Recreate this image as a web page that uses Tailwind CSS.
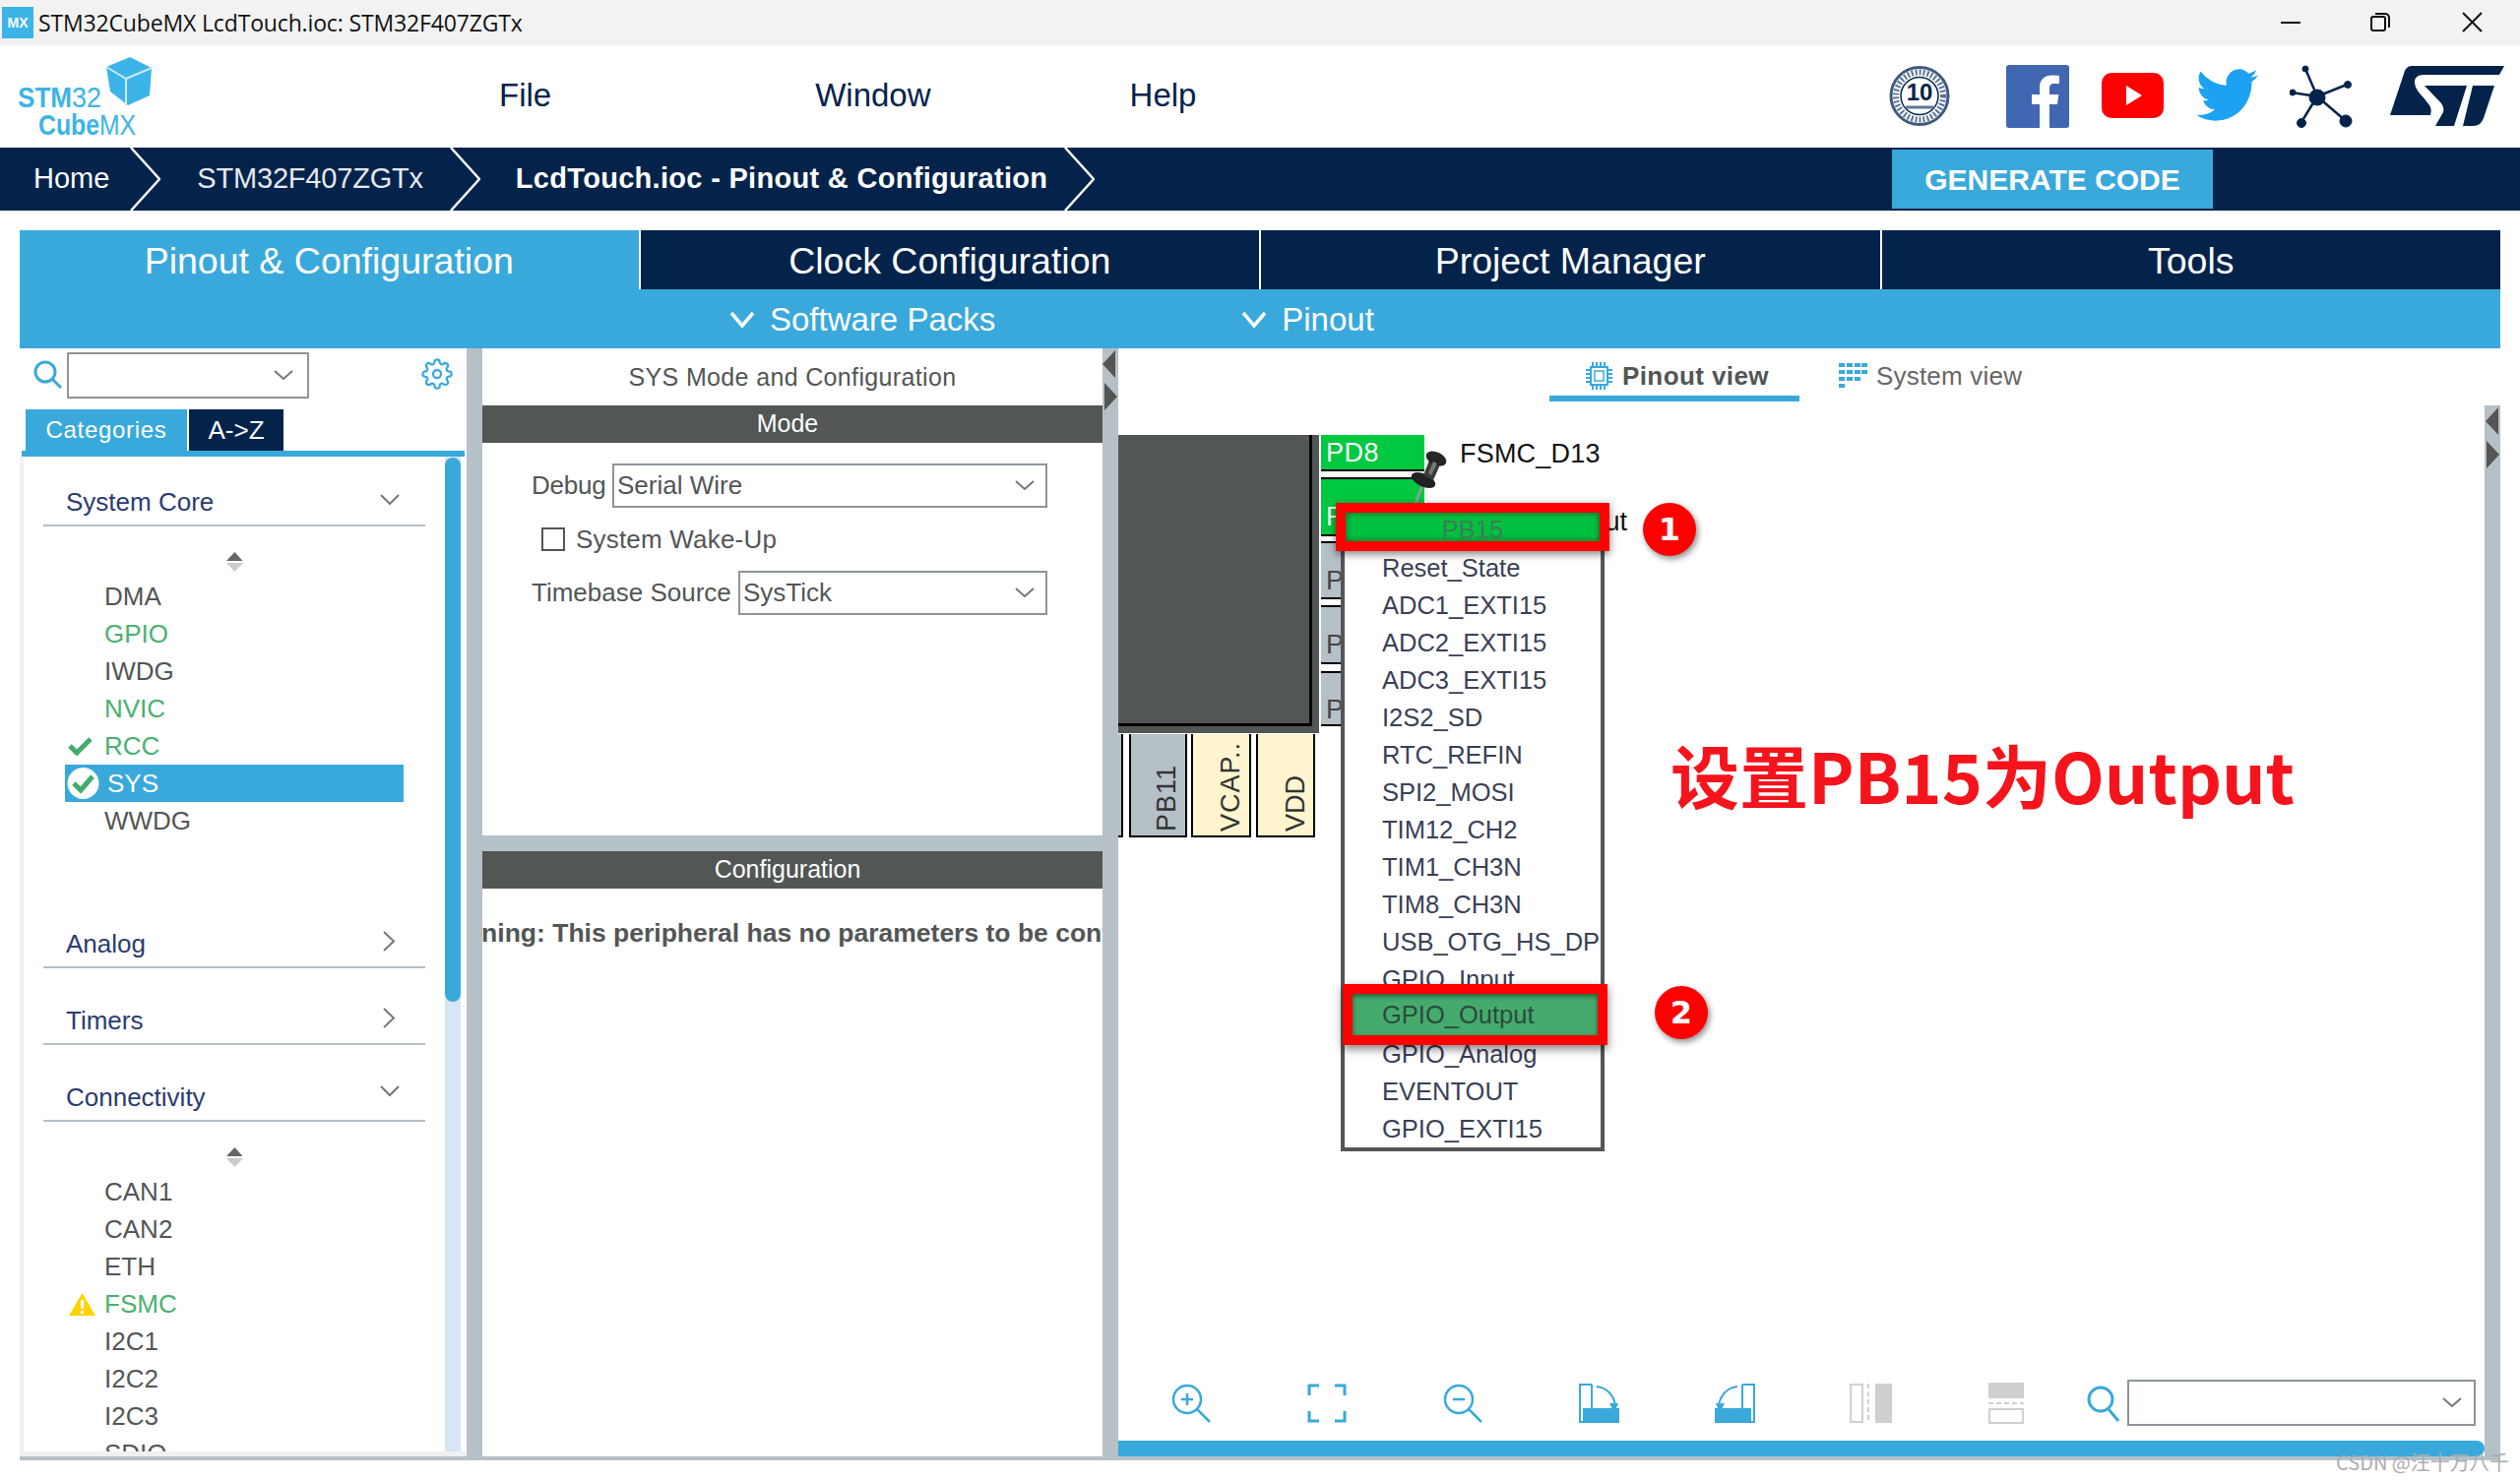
<!DOCTYPE html>
<html lang="en">
<head>
<meta charset="UTF-8">
<title>STM32CubeMX LcdTouch.ioc: STM32F407ZGTx</title>
<script src="https://cdn.jsdelivr.net/npm/@tailwindcss/browser@4"></script>
</head>
<body class="w-[2560px] h-[1504px] overflow-hidden bg-white relative font-['Liberation_Sans','Noto_Sans_CJK_SC',sans-serif] text-[26px] text-[#525655]">

<!-- Title bar -->
<div class="h-[46px] bg-[#f2f2f2] flex items-center relative">
  <div class="ml-[2px] w-[32px] h-[32px] bg-[#3cb4e7] text-white text-[14px] font-bold flex items-center justify-center">MX</div>
  <span class="ml-[5px] text-[23px] text-[#111] font-['Open_Sans',sans-serif] tracking-[-0.15px]">STM32CubeMX LcdTouch.ioc: STM32F407ZGTx</span>
  <svg class="ml-auto mr-[223px] w-[20px] h-[20px]" viewBox="0 0 20 20"><path d="M0 10h20" stroke="#111" stroke-width="2"/></svg>
  <svg class="absolute left-[2408px] top-[12px] w-[20px] h-[20px]" viewBox="0 0 20 20" fill="none" stroke="#111" stroke-width="2"><rect x="1" y="5" width="14" height="14" rx="2"/><path d="M5 2h10a4 4 0 0 1 4 4v10"/></svg>
  <svg class="absolute left-[2501px] top-[12px] w-[21px] h-[21px]" viewBox="0 0 21 21" stroke="#111" stroke-width="2"><path d="M1 1l19 19M20 1L1 20"/></svg>
</div>

<!-- Menu bar -->
<div class="h-[104px] relative flex items-center text-[33px] text-[#03234b] pb-[2px]">
  <svg class="absolute left-[14px] top-[8px] w-[145px] h-[88px]" viewBox="0 0 145 88">
    <path d="M118 4l22 11-2 28-22 10-18-14-4-25z" fill="#3cb4e7"/>
    <path d="M114 26v27M114 26L94 14M114 26l26-11" stroke="#cfeaf8" stroke-width="2" fill="none"/>
    <text x="4" y="55" font-size="30" font-weight="700" fill="#3cb4e7" textLength="55" lengthAdjust="spacingAndGlyphs">STM</text>
    <text x="59" y="55" font-size="30" fill="#3cb4e7" textLength="30" lengthAdjust="spacingAndGlyphs">32</text>
    <text x="25" y="83" font-size="30" font-weight="700" fill="#3cb4e7" textLength="62" lengthAdjust="spacingAndGlyphs">Cube</text>
    <text x="87" y="83" font-size="30" fill="#3cb4e7" textLength="37" lengthAdjust="spacingAndGlyphs">MX</text>
  </svg>
  <span class="ml-[507px]">File</span>
  <span class="ml-[268px]">Window</span>
  <span class="ml-[202px]">Help</span>

  <svg class="absolute left-[1919px] top-[20px] w-[62px] h-[63px]" viewBox="0 0 62 63">
    <circle cx="31" cy="31.5" r="29" fill="#fff" stroke="#3f5a80" stroke-width="3"/>
    <circle cx="31" cy="31.5" r="24" fill="none" stroke="#5d7596" stroke-width="6" stroke-dasharray="2 2"/>
    <circle cx="31" cy="31.5" r="19" fill="#fff" stroke="#03234b" stroke-width="1.5"/>
    <text x="31" y="36" font-size="24" font-weight="700" fill="#03234b" text-anchor="middle">10</text>
    <path d="M17 43h28" stroke="#5d7596" stroke-width="3"/>
  </svg>
  <svg class="absolute left-[2038px] top-[20px] w-[64px] h-[64px]" viewBox="0 0 64 64">
    <rect width="64" height="64" rx="3" fill="#4267b2"/>
    <path d="M44 64V40h8l1.300-10H44v-6c0-3 1-5 5-5h5V11c-1 0-4-.4-7.500-.4C39 10.600 34 15 34 23v7h-8v10h8v24z" fill="#fff"/>
  </svg>
  <svg class="absolute left-[2135px] top-[28px] w-[63px] h-[46px]" viewBox="0 0 63 46">
    <rect width="63" height="46" rx="10" fill="#f00"/>
    <path d="M25 13l16 10-16 10z" fill="#fff"/>
  </svg>
  <svg class="absolute left-[2231px] top-[24px] w-[63px] h-[54px]" viewBox="0 0 24 20" preserveAspectRatio="none">
    <path d="M24 2.400a9.800 9.800 0 0 1-2.800.8A4.900 4.900 0 0 0 23.300.500a9.800 9.800 0 0 1-3.100 1.200A4.900 4.900 0 0 0 11.800 6.200 14 14 0 0 1 1.700.900a4.900 4.900 0 0 0 1.500 6.600A4.900 4.900 0 0 1 1 6.900v.1a4.900 4.900 0 0 0 3.900 4.800 4.900 4.900 0 0 1-2.200.1 4.900 4.900 0 0 0 4.600 3.400A9.900 9.900 0 0 1 0 17.300 13.900 13.900 0 0 0 7.500 19.500c9.100 0 14-7.500 14-14v-.6A10 10 0 0 0 24 2.400z" fill="#1da1f2"/>
  </svg>
  <svg class="absolute left-[2326px] top-[20px] w-[64px] h-[64px]" viewBox="0 0 64 64" fill="#03234b" stroke="#03234b">
    <path d="M28 32L16 4M28 32L58 20M28 32L2 28M28 32L12 58M28 32L56 56" stroke-width="2.500" fill="none"/>
    <circle cx="28" cy="33" r="8"/><circle cx="16" cy="4" r="3"/><circle cx="59" cy="20" r="3.500"/><circle cx="3" cy="28" r="3"/><circle cx="12" cy="59" r="4.500"/><circle cx="57" cy="57" r="6"/>
  </svg>
  <svg class="absolute left-[2428px] top-[20px] w-[116px] h-[64px]" viewBox="0 0 116 64" fill="#03234b">
    <path d="M22 1H116L111 10H34c-6 0-9 3-9 7 0 5 3 10 8 15l7 9c2 3 2 6 1 10H0L14 9c1-5 4-8 8-8z"/>
    <path d="M35 21H78L65 62H46l8-14c1-3 0-6-2-9z"/>
    <path d="M84 21h22L95 54c-2 5-5 8-11 8H74z"/>
  </svg>
</div>

<!-- Breadcrumb -->
<div class="h-[64px] bg-[#03234b] flex items-center text-white text-[29px]">
  <span class="ml-[34px]">Home</span>
  <svg class="ml-[21px] w-[31px] h-[64px]" viewBox="0 0 31 64" fill="none" stroke="#fff" stroke-width="2.500"><path d="M1 0l29 32L1 64"/></svg>
  <span class="ml-[37px] text-[#e6e9ee] tracking-[-0.2px]">STM32F407ZGTx</span>
  <svg class="ml-[27px] w-[31px] h-[64px]" viewBox="0 0 31 64" fill="none" stroke="#fff" stroke-width="2.500"><path d="M1 0l29 32L1 64"/></svg>
  <span class="ml-[36px] font-bold tracking-[0.3px]">LcdTouch.ioc - Pinout &amp; Configuration</span>
  <svg class="ml-[17px] w-[31px] h-[64px]" viewBox="0 0 31 64" fill="none" stroke="#fff" stroke-width="2.500"><path d="M1 0l29 32L1 64"/></svg>
  <div class="ml-auto mr-[312px] w-[326px] h-[60px] bg-[#39a9dc] flex items-center justify-center font-bold text-[30px]">GENERATE CODE</div>
</div>

<!-- Perspective tabs -->
<div class="mt-[20px] mx-[20px] h-[60px] grid grid-cols-4 gap-[2px] text-white text-[37.500px] bg-white">
  <div class="bg-[#39a9dc] flex items-center justify-center pt-[2px]">Pinout &amp; Configuration</div>
  <div class="bg-[#03234b] flex items-center justify-center pt-[2px]">Clock Configuration</div>
  <div class="bg-[#03234b] flex items-center justify-center pt-[2px]">Project Manager</div>
  <div class="bg-[#03234b] flex items-center justify-center pt-[2px]">Tools</div>
</div>
<div class="mx-[20px] h-[60px] bg-[#39a9dc] flex items-center text-white text-[33px] pt-[2px]">
  <svg class="ml-[721px] w-[26px] h-[18px]" viewBox="0 0 26 18" fill="none" stroke="#fff" stroke-width="3.500"><path d="M2 2l11 13L24 2"/></svg>
  <span class="ml-[15px]">Software Packs</span>
  <svg class="ml-[250px] w-[26px] h-[18px]" viewBox="0 0 26 18" fill="none" stroke="#fff" stroke-width="3.500"><path d="M2 2l11 13L24 2"/></svg>
  <span class="ml-[15px]">Pinout</span>
</div>

<!-- Workspace -->
<div class="mx-[20px] h-[1130px] flex">

  <!-- Categories column -->
  <div class="w-[454px] h-full flex flex-col relative">
    <div class="h-[62px] flex items-start pt-[4px] relative">
      <svg class="ml-[14px] mt-[8px] w-[29px] h-[29px]" viewBox="0 0 29 29" fill="none" stroke="#39a9dc" stroke-width="3"><circle cx="12" cy="12" r="10"/><path d="M19 19l9 9"/></svg>
      <div class="ml-[5px] w-[246px] h-[47px] border-[2px] border-[#8e9499] flex items-center justify-end pr-[14px]">
        <svg class="w-[20px] h-[11px]" viewBox="0 0 20 11" fill="none" stroke="#777" stroke-width="2"><path d="M1 1l9 8 9-8"/></svg>
      </div>
      <svg class="ml-[114px] mt-[6px] w-[32px] h-[32px]" viewBox="0 0 24 24" fill="none" stroke="#39a9dc" stroke-width="1.700"><circle cx="12" cy="12" r="3"/><path d="M19.4 15a1.650 1.650 0 0 0 .33 1.820l.06.06a2 2 0 0 1 0 2.830 2 2 0 0 1-2.830 0l-.06-.06a1.650 1.650 0 0 0-1.820-.33 1.650 1.650 0 0 0-1 1.510V21a2 2 0 0 1-2 2 2 2 0 0 1-2-2v-.09A1.650 1.650 0 0 0 9 19.400a1.650 1.650 0 0 0-1.820.33l-.06.06a2 2 0 0 1-2.830 0 2 2 0 0 1 0-2.830l.06-.06a1.650 1.650 0 0 0 .33-1.820 1.650 1.650 0 0 0-1.510-1H3a2 2 0 0 1-2-2 2 2 0 0 1 2-2h.09A1.650 1.650 0 0 0 4.600 9a1.650 1.650 0 0 0-.33-1.820l-.06-.06a2 2 0 0 1 0-2.830 2 2 0 0 1 2.830 0l.06.06a1.650 1.650 0 0 0 1.820.33H9a1.650 1.650 0 0 0 1-1.510V3a2 2 0 0 1 2-2 2 2 0 0 1 2 2v.09a1.650 1.650 0 0 0 1 1.510 1.650 1.650 0 0 0 1.820-.33l.06-.06a2 2 0 0 1 2.830 0 2 2 0 0 1 0 2.830l-.06.06a1.650 1.650 0 0 0-.33 1.820V9a1.650 1.650 0 0 0 1.510 1H21a2 2 0 0 1 2 2 2 2 0 0 1-2 2h-.09a1.650 1.650 0 0 0-1.510 1z"/></svg>
    </div>
    <div class="h-[42px] flex text-white text-[24px] pl-[6px] gap-[2px]">
      <div class="w-[164px] bg-[#39a9dc] flex items-center justify-center tracking-[0.7px]">Categories</div>
      <div class="w-[96px] bg-[#03234b] flex items-center justify-center text-[26px]">A-&gt;Z</div>
    </div>
    <div class="ml-[2px] mr-[2px] h-[6px] bg-[#39a9dc] shrink-0"></div>

    <div class="flex-1 flex overflow-hidden border-l-[4px] border-[#f0f0f0] relative">
      <div class="flex-1 pl-[20px] pr-[20px] overflow-hidden">
        <!-- System Core -->
        <div class="w-[388px] h-[71px] border-b-[2px] border-[#b5c0c7] flex items-end justify-between pl-[23px] pb-[3px] text-[#2a3b70]">
          <span>System Core</span>
          <svg class="mr-[26px] mb-[16px] w-[20px] h-[12px]" viewBox="0 0 20 12" fill="none" stroke="#777" stroke-width="2"><path d="M1 1l9 9 9-9"/></svg>
        </div>
        <div class="w-[388px] h-[52px] flex items-center pl-[186px] pt-[20px]">
          <svg class="w-[17px] h-[20px]" viewBox="0 0 17 20"><path d="M8.500 0l8 9H0z" fill="#666"/><path d="M0 11h17l-8.500 9z" fill="#ccc"/></svg>
        </div>
        <div class="flex flex-col w-[388px] leading-[38px] pl-[62px]">
          <span class="h-[38px]">DMA</span>
          <span class="h-[38px] text-[#49b170]">GPIO</span>
          <span class="h-[38px]">IWDG</span>
          <span class="h-[38px] text-[#49b170]">NVIC</span>
          <span class="h-[38px] text-[#49b170] relative">RCC
            <svg class="absolute left-[-37px] top-[10px] w-[25px] h-[19px]" viewBox="0 0 25 19" fill="none" stroke="#45ab6c" stroke-width="5"><path d="M2 9l7 7L23 2"/></svg>
          </span>
          <span class="h-[38px] relative text-white z-0 pl-[3px]">
            <span class="absolute left-[-40px] w-[344px] top-0 h-[38px] bg-[#39a9dc] -z-10"></span>
            <svg class="absolute left-[-38px] top-[2px] w-[33px] h-[34px]" viewBox="0 0 33 34"><circle cx="16.500" cy="17" r="16" fill="#fff"/><path d="M7 17l7 7L26 10" fill="none" stroke="#45ab6c" stroke-width="5"/></svg>
            SYS</span>
          <span class="h-[38px]">WWDG</span>
        </div>
        <!-- Analog, Timers -->
        <div class="mt-[73px] w-[388px] h-[58px] border-b-[2px] border-[#b5c0c7] flex items-end justify-between pl-[23px] pb-[3px] text-[#2a3b70]">
          <span>Analog</span>
          <svg class="mr-[30px] mb-[12px] w-[13px] h-[21px]" viewBox="0 0 13 21" fill="none" stroke="#777" stroke-width="2"><path d="M1 1l10 9.500L1 20"/></svg>
        </div>
        <div class="mt-[20px] w-[388px] h-[58px] border-b-[2px] border-[#b5c0c7] flex items-end justify-between pl-[23px] pb-[3px] text-[#2a3b70]">
          <span>Timers</span>
          <svg class="mr-[30px] mb-[12px] w-[13px] h-[21px]" viewBox="0 0 13 21" fill="none" stroke="#777" stroke-width="2"><path d="M1 1l10 9.500L1 20"/></svg>
        </div>
        <div class="mt-[20px] w-[388px] h-[58px] border-b-[2px] border-[#b5c0c7] flex items-end justify-between pl-[23px] pb-[3px] text-[#2a3b70]">
          <span>Connectivity</span>
          <svg class="mr-[26px] mb-[20px] w-[20px] h-[12px]" viewBox="0 0 20 12" fill="none" stroke="#777" stroke-width="2"><path d="M1 1l9 9 9-9"/></svg>
        </div>
        <div class="w-[388px] h-[52px] flex items-center pl-[186px] pt-[20px]">
          <svg class="w-[17px] h-[20px]" viewBox="0 0 17 20"><path d="M8.500 0l8 9H0z" fill="#666"/><path d="M0 11h17l-8.500 9z" fill="#ccc"/></svg>
        </div>
        <div class="flex flex-col w-[388px] leading-[38px] pl-[62px]">
          <span class="h-[38px]">CAN1</span>
          <span class="h-[38px]">CAN2</span>
          <span class="h-[38px]">ETH</span>
          <span class="h-[38px] text-[#49b170] relative">FSMC
            <svg class="absolute left-[-36px] top-[8px] w-[27px] h-[23px]" viewBox="0 0 27 23"><path d="M13.500 0L27 23H0z" fill="#ffd200"/><path d="M13.500 7v9M13.500 18v3" stroke="#fff" stroke-width="3"/></svg>
          </span>
          <span class="h-[38px]">I2C1</span>
          <span class="h-[38px]">I2C2</span>
          <span class="h-[38px]">I2C3</span>
          <span class="h-[38px]">SDIO</span>
        </div>
      </div>
      <!-- scrollbar -->
      <div class="w-[16px] mr-[6px] bg-[#d6e6f4] shrink-0">
        <div class="h-[553px] mt-[1px] bg-[#39a9dc] rounded-full"></div>
      </div>
      <div class="absolute left-0 right-0 bottom-0 h-[5px] bg-[#f0f0f0]"></div>
    </div>
    <div class="h-[4px] bg-[#b5c0c7] shrink-0"></div>
  </div>

  <div class="w-[16px] h-full bg-[#b5c0c7] shrink-0"></div>

  <!-- Mode and configuration column -->
  <div class="w-[630px] h-full flex flex-col shrink-0">
    <div class="h-[58px] flex items-center justify-center tracking-[0.35px] text-[25px] pt-[1px]">SYS Mode and Configuration</div>
    <div class="h-[38px] bg-[#525655] text-white text-[25px] flex items-center justify-center pr-[10px]">Mode</div>
    <div class="flex-none h-[399px] relative pl-[50px]">
      <div class="flex items-center pt-[21px] h-[66px]">
        <span class="w-[82px] tracking-[-0.2px]">Debug</span>
        <div class="w-[442px] h-[45px] border-[2px] border-[#8e9499] flex items-center justify-between pl-[3px] pr-[11px]">
          <span>Serial Wire</span>
          <svg class="w-[20px] h-[11px]" viewBox="0 0 20 11" fill="none" stroke="#777" stroke-width="2"><path d="M1 1l9 8 9-8"/></svg>
        </div>
      </div>
      <div class="flex items-center h-[64px] pl-[10px]">
        <span class="w-[24px] h-[24px] border-[2px] border-[#555] mr-[11px]"></span>
        <span class="tracking-[0.2px]">System Wake-Up</span>
      </div>
      <div class="flex items-center h-[45px]">
        <span class="w-[210px]">Timebase Source</span>
        <div class="w-[314px] h-[45px] border-[2px] border-[#8e9499] flex items-center justify-between pl-[3px] pr-[11px]">
          <span>SysTick</span>
          <svg class="w-[20px] h-[11px]" viewBox="0 0 20 11" fill="none" stroke="#777" stroke-width="2"><path d="M1 1l9 8 9-8"/></svg>
        </div>
      </div>
    </div>
    <div class="h-[16px] bg-[#b5c0c7] shrink-0"></div>
    <div class="h-[38px] bg-[#525655] text-white text-[25px] flex items-center justify-center pr-[10px] shrink-0">Configuration</div>
    <div class="flex-1 overflow-hidden relative">
      <div class="pt-[26px] font-bold text-[26.500px] whitespace-nowrap ml-[-50px]">Warning: This peripheral has no parameters to be configured</div>
    </div>
    <div class="h-[4px] bg-[#b5c0c7] shrink-0"></div>
  </div>

  <div class="w-[16px] h-full bg-[#b5c0c7] shrink-0 flex flex-col items-center pt-[2px] gap-[5px]">
    <svg class="w-[16px] h-[28px]" viewBox="0 0 16 28"><path d="M13 0v28L0 14z" fill="#555"/></svg>
    <svg class="w-[16px] h-[28px]" viewBox="0 0 16 28"><path d="M2 0v28l13-14z" fill="#555"/></svg>
  </div>

  <!-- Pinout canvas -->
  <div class="w-[1388px] h-full flex flex-col shrink-0">
    <div class="h-[58px] shrink-0 flex items-start relative">
      <div class="ml-[438px] w-[254px] h-[54px] border-b-[6px] border-[#39a9dc] flex items-center pl-[37px] pt-[8px] font-bold text-[#525655] tracking-[0.4px]">
        <svg class="w-[27px] h-[28px] mr-[10px]" viewBox="0 0 27 28" fill="none" stroke="#39a9dc"><rect x="5" y="5" width="17" height="18" stroke-width="2"/><rect x="9" y="9" width="9" height="10" stroke-width="1.500"/><path d="M7 0v4M11 0v4M15 0v4M19 0v4M7 24v4M11 24v4M15 24v4M19 24v4M0 8h4M0 12h4M0 16h4M0 20h4M23 8h4M23 12h4M23 16h4M23 20h4" stroke-width="2"/></svg>
        Pinout view
      </div>
      <div class="ml-[40px] h-[54px] flex items-center pt-[2px] text-[#666] tracking-[0.2px]">
        <svg class="w-[29px] h-[26px] mr-[9px]" viewBox="0 0 29 26" fill="#39a9dc"><path d="M0 0h6v4H0zM8 0h6v4H8zM16 0h6v4h-6zM23 0h6v4h-6zM0 7h6v4H0zM8 7h6v4H8zM16 7h6v4h-6zM23 7h6v4h-6zM0 14h6v4H0zM8 14h6v4H8zM16 14h6v4h-6zM0 21h6v4H0z"/></svg>
        System view
      </div>
    </div>

    <div class="h-[990px] relative shrink-0 text-[27px]">
      <!-- chip body and pins -->
      <div class="absolute left-0 top-[30px] w-[204px] h-[303px] bg-[#525655]">
        <div class="w-[197px] h-[296px] border-r-[3px] border-b-[3px] border-black"></div>
      </div>
      <div class="absolute left-[206px] top-[30px] w-[105px] h-[37px] bg-[#00c840] border-b-[2px] border-black text-white pl-[5px] leading-[37px] tracking-[0.5px]">PD8</div>
      <div class="absolute left-[347px] top-[29px] text-[#111] tracking-[0.2px]">FSMC_D13</div>
      <div class="absolute left-[206px] top-[73px] w-[105px] h-[60px] bg-[#00c840] border-y-[2px] border-black text-white pl-[5px] leading-[76px]">P</div>
      <div class="absolute right-[871px] top-[98px] text-[#111]">GPIO_Output</div>
      <div class="absolute left-[206px] top-[138px] w-[105px] h-[59px] bg-[#b5c0c7] border-y-[2px] border-black pl-[5px] leading-[76px] text-[#444]">P</div>
      <div class="absolute left-[206px] top-[203px] w-[105px] h-[60px] bg-[#b5c0c7] border-y-[2px] border-black pl-[5px] leading-[76px] text-[#444]">P</div>
      <div class="absolute left-[206px] top-[270px] w-[105px] h-[56px] bg-[#b5c0c7] border-y-[2px] border-black pl-[5px] leading-[74px] text-[#444]">P</div>
      <div class="absolute left-0 top-[334px] w-[5px] h-[105px] bg-[#b5c0c7] border-r-[2px] border-b-[2px] border-black"></div>
      <div class="absolute left-[11px] top-[334px] w-[59px] h-[105px] bg-[#b5c0c7] border-x-[2px] border-b-[2px] border-black flex items-end justify-end pr-[5px] pb-[4px] leading-none text-[#333]"><span class="[writing-mode:vertical-rl] rotate-180 tracking-[1px]">PB11</span></div>
      <div class="absolute left-[74px] top-[334px] w-[61px] h-[105px] bg-[#fef5cf] border-x-[2px] border-b-[2px] border-black flex items-end justify-end pr-[5px] pb-[4px] leading-none text-[#333]"><span class="[writing-mode:vertical-rl] rotate-180 tracking-[1px]">VCAP..</span></div>
      <div class="absolute left-[140px] top-[334px] w-[60px] h-[105px] bg-[#fef5cf] border-x-[2px] border-b-[2px] border-black flex items-end justify-end pr-[4px] pb-[4px] leading-none text-[#333]"><span class="[writing-mode:vertical-rl] rotate-180">VDD</span></div>

      <!-- pushpin -->
      <svg class="absolute left-[294px] top-[43px] w-[46px] h-[60px]" viewBox="0 0 46 60">
        <path d="M15 38L8 56" stroke="#999" stroke-width="2.500"/>
        <ellipse cx="16" cy="33" rx="13" ry="6.500" transform="rotate(25 16 33)" fill="#222"/>
        <path d="M23 10l11 5-8 18-10-5z" fill="#3a3a3a"/>
        <ellipse cx="29" cy="11" rx="11" ry="6.500" transform="rotate(25 29 11)" fill="#262626"/>
        <path d="M26 14l4 2-6 12-3-2z" fill="#777"/>
      </svg>

      <!-- signal menu -->
      <div class="absolute left-[226px] top-[107px] w-[268px] bg-white border-x-[4px] border-b-[4px] border-[#555] text-[25.500px] text-[#3a4055]">
        <div class="h-[39px] relative">
          <div class="absolute left-[-9px] top-[-8px] w-[278px] h-[49px] border-[10px] border-[#f00] bg-[#00c040] flex items-center justify-center pt-[6px] text-[#3f7d55] shadow-[inset_0_0_6px_rgba(0,0,0,.55),0_3px_8px_rgba(0,0,0,.5)]">PB15</div>
        </div>
        <div class="flex flex-col pl-[38px] leading-[38px] whitespace-nowrap">
          <span class="h-[38px]">Reset_State</span>
          <span class="h-[38px]">ADC1_EXTI15</span>
          <span class="h-[38px]">ADC2_EXTI15</span>
          <span class="h-[38px]">ADC3_EXTI15</span>
          <span class="h-[38px]">I2S2_SD</span>
          <span class="h-[38px]">RTC_REFIN</span>
          <span class="h-[38px]">SPI2_MOSI</span>
          <span class="h-[38px]">TIM12_CH2</span>
          <span class="h-[38px]">TIM1_CH3N</span>
          <span class="h-[38px]">TIM8_CH3N</span>
          <span class="h-[38px]">USB_OTG_HS_DP</span>
          <span class="h-[38px]">GPIO_Input</span>
          <span class="h-[38px] relative">
            <span class="absolute left-[-40px] top-[-14px] w-[269px] h-[62px] border-[10px] border-[#f00] bg-[#45ab6c] pl-[30px] leading-[43px] text-[#2b4a3e] shadow-[inset_0_2px_5px_rgba(0,0,0,.5),0_4px_9px_rgba(0,0,0,.5)]">GPIO_Output</span>
          </span>
          <span class="h-[38px]">GPIO_Analog</span>
          <span class="h-[38px]">EVENTOUT</span>
          <span class="h-[38px]">GPIO_EXTI15</span>
        </div>
      </div>

      <!-- annotations -->
      <div class="absolute left-[533px] top-[99px] w-[54px] h-[54px] rounded-full bg-[#f00] text-white font-['DejaVu_Sans'] font-bold text-[32px] flex items-center justify-center shadow-[2px_3px_6px_rgba(0,0,0,.45)]">1</div>
      <div class="absolute left-[545px] top-[590px] w-[54px] h-[54px] rounded-full bg-[#f00] text-white font-['DejaVu_Sans'] font-bold text-[32px] flex items-center justify-center shadow-[2px_3px_6px_rgba(0,0,0,.45)]">2</div>
      <div class="absolute left-[561px] top-[323px] text-[#f5141c] font-bold text-[70px] leading-[104px] font-['Noto_Sans_CJK_SC',sans-serif] whitespace-nowrap">设置PB15为Output</div>
    </div>

    <!-- toolbar -->
    <div class="h-[47px] flex items-center shrink-0 pl-[5px]">
      <div class="w-[138px] flex justify-center">
        <svg class="w-[41px] h-[40px]" viewBox="0 0 41 40" fill="none" stroke="#39a9dc" stroke-width="2.500"><circle cx="16" cy="16" r="14"/><path d="M26 26l13 13M16 10v12M10 16h12"/></svg>
      </div>
      <div class="w-[138px] flex justify-center">
        <svg class="w-[40px] h-[40px]" viewBox="0 0 40 40" fill="none" stroke="#39a9dc" stroke-width="3"><path d="M2 12V2h10M28 2h10v10M2 28v10h10M38 28v10H28"/></svg>
      </div>
      <div class="w-[138px] flex justify-center">
        <svg class="w-[41px] h-[40px]" viewBox="0 0 41 40" fill="none" stroke="#39a9dc" stroke-width="2.500"><circle cx="16" cy="16" r="14"/><path d="M26 26l13 13M10 16h12"/></svg>
      </div>
      <div class="w-[138px] flex justify-center">
        <svg class="w-[41px] h-[40px]" viewBox="0 0 41 40" fill="none" stroke="#39a9dc" stroke-width="2"><path d="M13 1H1v38h12"/><path d="M13 1v24"/><path d="M18 3c10 1 18 9 19 20" /><path d="M31 20h9l-4 10z" fill="#39a9dc" stroke="none"/><rect x="4" y="25" width="37" height="15" fill="#39a9dc" stroke="none"/></svg>
      </div>
      <div class="w-[138px] flex justify-center">
        <svg class="w-[41px] h-[40px]" viewBox="0 0 41 40" fill="none" stroke="#39a9dc" stroke-width="2"><path d="M28 1h12v38H28"/><path d="M28 1v24"/><path d="M23 3C13 4 5 12 4 23"/><path d="M1 20h9l-5 10z" fill="#39a9dc" stroke="none"/><rect x="0" y="25" width="37" height="15" fill="#39a9dc" stroke="none"/></svg>
      </div>
      <div class="w-[138px] flex justify-center">
        <svg class="w-[43px] h-[40px]" viewBox="0 0 43 40" fill="none"><rect x="1" y="1" width="12" height="38" stroke="#d0d0d0" stroke-width="2"/><path d="M19 0v40" stroke="#d0d0d0" stroke-width="2" stroke-dasharray="5 3"/><rect x="26" y="0" width="17" height="40" fill="#cfcfcf"/></svg>
      </div>
      <div class="w-[138px] flex justify-center">
        <svg class="w-[36px] h-[42px]" viewBox="0 0 36 42" fill="none"><rect width="36" height="16" fill="#cfcfcf"/><path d="M0 21h36" stroke="#d0d0d0" stroke-width="2" stroke-dasharray="5 3"/><rect x="1" y="27" width="34" height="14" stroke="#cfcfcf" stroke-width="2"/></svg>
      </div>
      <svg class="ml-[13px] w-[33px] h-[38px]" viewBox="0 0 33 38" fill="none" stroke="#39a9dc" stroke-width="3"><circle cx="14" cy="15" r="12"/><path d="M22 25l10 12"/></svg>
      <div class="ml-[8px] w-[354px] h-[47px] border-[2px] border-[#8e9499] flex items-center justify-end pr-[12px]">
        <svg class="w-[20px] h-[11px]" viewBox="0 0 20 11" fill="none" stroke="#777" stroke-width="2"><path d="M1 1l9 8 9-8"/></svg>
      </div>
    </div>
    <div class="h-[15px] shrink-0"></div>
    <div class="h-[16px] bg-[#39a9dc] rounded-r-full rounded-l-[4px] shrink-0"></div>
    <div class="h-[4px] bg-[#b5c0c7] shrink-0"></div>
  </div>

  <div class="w-[16px] h-[1072px] mt-[58px] bg-[#b5c0c7] shrink-0 flex flex-col items-center gap-[6px] pt-[2px]">
    <svg class="w-[16px] h-[28px]" viewBox="0 0 16 28"><path d="M14 0v28L1 14z" fill="#555"/></svg>
    <svg class="w-[16px] h-[28px]" viewBox="0 0 16 28"><path d="M2 0v28l13-14z" fill="#555"/></svg>
  </div>
</div>

<!-- watermark -->
<div class="absolute left-[2373px] top-[1471px] text-[20px] text-[#a9adb0] whitespace-nowrap font-['Noto_Sans_CJK_SC',sans-serif]">CSDN @汪十万八千</div>
</body>
</html>
